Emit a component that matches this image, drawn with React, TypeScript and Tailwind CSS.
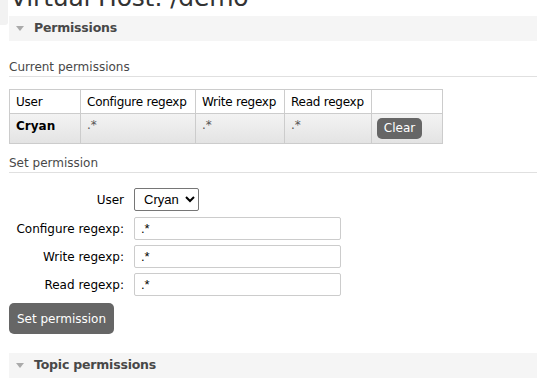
const cols = [
    { name: "User", width: "w-[71px]" },
    { name: "Configure regexp", width: "w-[115px]" },
    { name: "Write regexp", width: "w-[89px]" },
    { name: "Read regexp", width: "w-[87px]" },
    { name: "", width: "w-[71px]" },
];

const SectionBar = ({ title }: { title: string }) => (
    <div className="flex items-center h-[25px] bg-[#f5f5f5] pl-[7px] gap-[10px]">
        <span className="w-0 h-0 border-l-[4px] border-r-[4px] border-t-[5px] border-l-transparent border-r-transparent border-t-[#aaa]"></span>
        <span className="font-bold text-[12.5px] text-[#484848] tracking-[-0.2px]">{title}</span>
    </div>
);

const SubHeading = ({ title }: { title: string }) => (
    <div className="text-[12px] leading-[15px] text-[#484848] border-b border-[#e0e0e0] pb-[1px]">{title}</div>
);

const FormRow = ({ label, children }: { label: string, children: React.ReactNode }) => (
    <div className="flex items-center">
        <label className="w-[125px] shrink-0 text-right text-[12px] text-black pr-[10px] whitespace-nowrap">{label}</label>
        {children}
    </div>
);

const inputClass = "h-[23px] w-[207px] border border-[#ccc] rounded-[2px] px-[6px] text-[13px] font-['Liberation_Sans',sans-serif] text-black bg-white";

const App = () => {

    return (
        <div className="flex w-[537px] h-[382px] overflow-hidden bg-white font-['DejaVu_Sans',sans-serif]">

            <div className="w-[9px] shrink-0">
                <div className="w-[8px] h-[25px] bg-[#f2f2f2] rounded-br-[3px]"></div>
            </div>

            <div className="flex-1 flex flex-col">

                <h1 className="text-[25px] leading-[30px] text-[#333] mt-[-17px] ml-[1px] whitespace-nowrap tracking-[-0.2px]">Virtual Host: /demo</h1>

                <div className="mt-[3px]">
                    <SectionBar title="Permissions" />
                </div>

                <div className="mt-[19px]">
                    <SubHeading title="Current permissions" />
                </div>

                <table className="mt-[12px] w-[433px] table-fixed border-collapse text-[12px] text-black">
                    <thead>
                        <tr className="h-[24px] bg-white">
                            {
                                cols.map((col, index) => {
                                    return (
                                        <th key={index} className={`${col.width} border border-[#ccc] font-normal text-left px-[6px] py-0 whitespace-nowrap tracking-[-0.25px]`}>{col.name}</th>
                                    )
                                })
                            }
                        </tr>
                    </thead>
                    <tbody>
                        <tr className="h-[30px] bg-gradient-to-b from-[#f3f3f3] to-[#e3e3e3]">
                            <td className="border border-[#ccc] px-[6px] align-top pt-[3px] font-bold">Cryan</td>
                            <td className="border border-[#ccc] px-[6px] align-top pt-[2px] text-[#555]">.*</td>
                            <td className="border border-[#ccc] px-[6px] align-top pt-[2px] text-[#555]">.*</td>
                            <td className="border border-[#ccc] px-[6px] align-top pt-[2px] text-[#555]">.*</td>
                            <td className="border border-[#ccc] px-[5px] align-middle">
                                <button className="bg-[#666] text-white text-[12px] rounded-[5px] w-[45px] h-[21px] leading-[21px]">Clear</button>
                            </td>
                        </tr>
                    </tbody>
                </table>

                <div className="mt-[12px]">
                    <SubHeading title="Set permission" />
                </div>

                <div className="flex flex-col gap-[5px] mt-[15px]">
                    <div className="mb-[1px]">
                        <FormRow label="User">
                            <select className="h-[23px] w-[65px] border border-[#767676] rounded-[2px] text-[13px] pl-[5px] font-['Liberation_Sans',sans-serif] bg-white text-black" defaultValue="Cryan">
                                <option>Cryan</option>
                            </select>
                        </FormRow>
                    </div>
                    <FormRow label="Configure regexp:">
                        <input className={inputClass} defaultValue=".*" />
                    </FormRow>
                    <FormRow label="Write regexp:">
                        <input className={inputClass} defaultValue=".*" />
                    </FormRow>
                    <FormRow label="Read regexp:">
                        <input className={inputClass} defaultValue=".*" />
                    </FormRow>
                </div>

                <div className="mt-[7px]">
                    <button className="bg-[#666] text-white text-[12px] rounded-[5px] w-[105px] h-[31px]">Set permission</button>
                </div>

                <div className="mt-[19px]">
                    <SectionBar title="Topic permissions" />
                </div>

            </div>
        </div>
    )
}

export default App
